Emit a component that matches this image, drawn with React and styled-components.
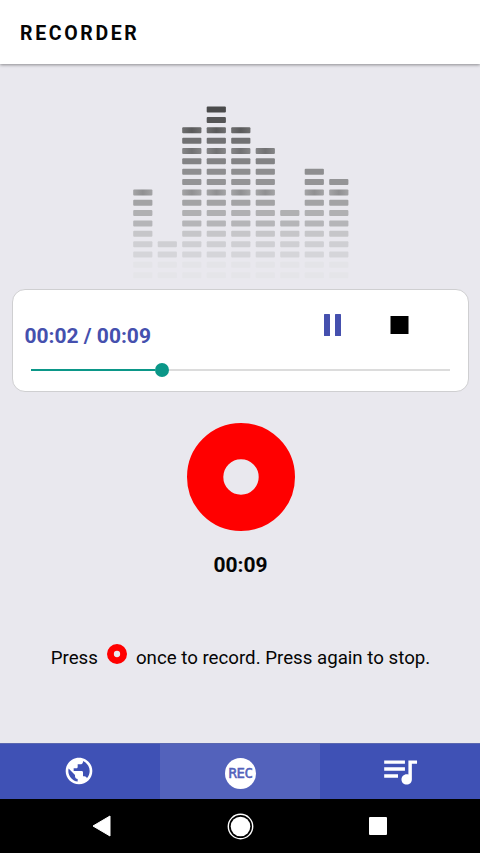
import React, { useState } from 'react';
import styled, { createGlobalStyle } from 'styled-components';
import { MdPublic, MdQueueMusic } from 'react-icons/md';

const ROW_COLORS = [
    '#4a4a4b', '#555556', '#626263', '#717173', '#7b7b7d', '#838385', '#8e8e90', '#949496', '#9c9c9e',
    '#a3a3a5', '#b0b0b2', '#b5b5b8', '#c6c6c9', '#cfcfd3', '#d5d5d9', '#e4e4e8', '#e5e5e9',
];

// index of the highest lit segment in each column
const COLUMNS = [8, 13, 2, 0, 2, 4, 10, 6, 7];

const Equalizer = () => (
    <svg width="217" height="174" viewBox="0 0 217 174">
        <defs>
            <linearGradient id="sheen">
                <stop offset="0" stopColor="#fff" stopOpacity="0.08" />
                <stop offset="0.5" stopColor="#000" stopOpacity="0.08" />
                <stop offset="1" stopColor="#fff" stopOpacity="0.08" />
            </linearGradient>
        </defs>
        {COLUMNS.map((top, col) => ROW_COLORS.map((color, row) => {
            if (row < top) return null;
            const box = { x: 1.2 + col * 24.5, y: 1.6 + row * 10.35, width: 19.2, height: 6, rx: 1 };
            return (
                <g key={`${col}-${row}`}>
                    <rect {...box} fill={color} />
                    {(row === 2 || row === 4 || row === 8) && <rect {...box} fill="url(#sheen)" />}
                </g>
            );
        }))}
    </svg>
);

const RecordDot = ({ size, hole }) => (
    <svg width={size} height={size} viewBox="0 0 108 108">
        <circle cx="54" cy="54" r={(54 + hole) / 2} fill="none" stroke="#ff0000" strokeWidth={54 - hole} />
    </svg>
);

const App = () => {
    const [tab, setTab] = useState('rec');
    return (
        <Screen>
            <GlobalStyle />
            <Header>RECORDER</Header>
            <Content>
                <Equalizer />
                <Player>
                    <Controls>
                        <Time>00:02 / 00:09</Time>
                        <IconButton $gap={49} aria-label="Pause">
                            <svg width="17" height="22" viewBox="0 0 17 22" fill="#4550ae">
                                <rect width="6" height="22" rx="0.5" />
                                <rect x="11" width="6" height="22" rx="0.5" />
                            </svg>
                        </IconButton>
                        <IconButton $gap={0} aria-label="Stop">
                            <svg width="19" height="18"><rect x="0.5" width="18" height="18" /></svg>
                        </IconButton>
                    </Controls>
                    <Track>
                        <Played />
                        <Thumb />
                        <Remaining />
                    </Track>
                </Player>
                <RecordButton aria-label="Record"><RecordDot size={108} hole={17.7} /></RecordButton>
                <Elapsed>00:09</Elapsed>
                <Hint>
                    <span>Press</span>
                    <HintIcon><RecordDot size={20} hole={17} /></HintIcon>
                    <span>once to record. Press again to stop.</span>
                </Hint>
            </Content>
            <Tabs>
                <Tab $active={tab === 'web'} $right={2} $bottom={2} onClick={() => setTab('web')}><MdPublic size={32} /></Tab>
                <Tab $active={tab === 'rec'} $left={1} $top={3} onClick={() => setTab('rec')}><RecBadge>REC</RecBadge></Tab>
                <Tab $active={tab === 'list'} $bottom={1} onClick={() => setTab('list')}><MdQueueMusic size={41.5} /></Tab>
            </Tabs>
            <SystemBar>
                <svg width="19" height="22" viewBox="0 0 19 22"><path d="M1 11 L18 1 V21 Z" fill="#fff" stroke="#fff" strokeLinejoin="round" /></svg>
                <svg width="27" height="27" viewBox="0 0 27 27">
                    <circle cx="13.5" cy="13.5" r="12.2" fill="none" stroke="#fff" strokeWidth="1.4" />
                    <circle cx="13.5" cy="13.5" r="9.8" fill="#fff" />
                </svg>
                <svg width="18" height="18"><rect width="18" height="18" rx="1" fill="#fff" /></svg>
            </SystemBar>
        </Screen>
    );
}

const GlobalStyle = createGlobalStyle`
  body {
    margin: 0;
  }

  * {
    box-sizing: border-box;
  }

  svg {
    display: block;
    flex-shrink: 0;
  }

  button {
    padding: 0;
    border: none;
    background: none;
  }
`;

const Screen = styled.div`
  display: flex;
  flex-direction: column;
  width: 480px;
  height: 853px;
  overflow: hidden;
  background: #e9e8ee;
  color: #050505;
  font-family: Roboto, sans-serif;
  white-space: nowrap;
`;

const Header = styled.header`
  height: 64px;
  padding: 2px 20px 0;
  display: flex;
  align-items: center;
  flex-shrink: 0;
  background: #fff;
  box-shadow: 0 1px 3px rgba(0, 0, 0, 0.4);
  font-size: 19.5px;
  font-weight: 700;
  letter-spacing: 2.65px;
`;

const Content = styled.main`
  flex: 1;
  min-height: 0;
  display: flex;
  flex-direction: column;
  align-items: center;
  padding-top: 41px;
`;

const Player = styled.section`
  width: 457px;
  height: 103px;
  margin-top: 10px;
  padding: 12px 18px 0 12px;
  background: #fff;
  border: 1px solid #cfcfd1;
  border-radius: 13px;
`;

const Controls = styled.div`
  display: flex;
  height: 48px;
`;

const Time = styled.div`
  width: 299px;
  padding-top: 21px;
  color: #4550ae;
  font-size: 21px;
  font-weight: 700;
  line-height: 26px;
`;

const IconButton = styled.button`
  height: 46px;
  margin-right: ${(props) => props.$gap}px;
  display: flex;
  align-items: center;
`;

const Track = styled.div`
  display: flex;
  align-items: center;
  height: 14px;
  margin: 12.5px 0 0 6px;
`;

const Played = styled.div`
  width: 124px;
  height: 2px;
  background: #0b9788;
`;

const Thumb = styled.div`
  width: 14px;
  height: 14px;
  border-radius: 50%;
  background: #0b9788;
`;

const Remaining = styled.div`
  flex: 1;
  height: 2px;
  background: #dcdcdc;
`;

const RecordButton = styled.button`
  margin-top: 31px;
  padding-left: 1px;
`;

const Elapsed = styled.div`
  margin: 20px 0 0 1px;
  font-size: 21px;
  font-weight: 700;
  line-height: 28px;
`;

const Hint = styled.p`
  display: flex;
  align-items: center;
  margin: 65px 0 0 1px;
  font-size: 18.7px;
  line-height: 28px;
`;

const HintIcon = styled.span`
  margin: 0 9px 8px 9px;
`;

const Tabs = styled.nav`
  display: grid;
  grid-template-columns: repeat(3, 1fr);
  height: 56px;
  flex-shrink: 0;
`;

const Tab = styled.button`
  display: flex;
  align-items: center;
  justify-content: center;
  padding: ${({ $top = 0, $right = 0, $bottom = 0, $left = 0 }) => `${$top}px ${$right}px ${$bottom}px ${$left}px`};
  color: #fff;
  background: ${(props) => (props.$active ? '#5362bb' : '#3f51b5')};
  border-top: 1px solid #5a67b0;
`;

const RecBadge = styled.span`
  display: flex;
  align-items: center;
  justify-content: center;
  width: 31px;
  height: 31px;
  border-radius: 50%;
  background: #fff;
  color: #5362bb;
  font-family: 'DejaVu Sans Mono', monospace;
  font-size: 14px;
  letter-spacing: -0.5px;
  -webkit-text-stroke: 0.5px #5362bb;
`;

const SystemBar = styled.footer`
  display: flex;
  align-items: center;
  height: 54px;
  padding: 0 93px 0 92px;
  justify-content: space-between;
  flex-shrink: 0;
  background: #000;
`;

export default App;
